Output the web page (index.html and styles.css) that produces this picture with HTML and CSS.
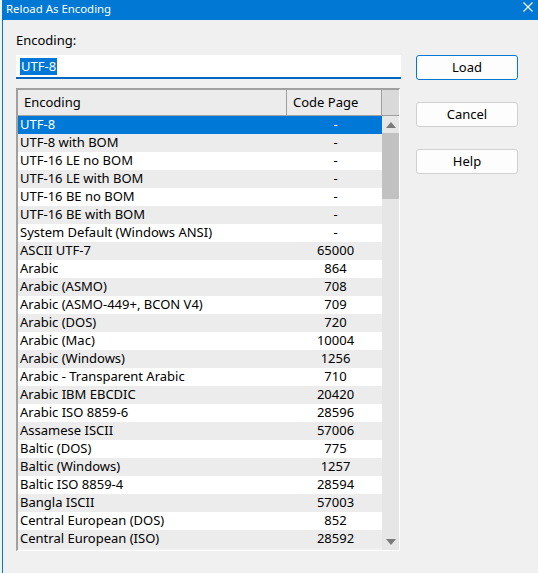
FILE: index.html
```html
<!DOCTYPE html>
<html lang="en">

<head>
    <meta charset="UTF-8">
    <meta name="viewport" content="width=device-width, initial-scale=1.0">
    <title>Reload As Encoding</title>
    <link rel="stylesheet" href="styles.css">
</head>

<body>
    <div class="window">
        <div class="titlebar">
            <span class="title">Reload As Encoding</span>
            <svg class="close" width="10" height="10" viewBox="0 0 10 10">
                <path d="M0.5 0.5 L9.5 9.5 M9.5 0.5 L0.5 9.5" stroke="#fff" stroke-width="1.1" fill="none" />
            </svg>
        </div>
        <div class="dialog">
            <div class="main">
                <label class="label" for="enc">Encoding:</label>
                <div class="input"><span class="selected-text">UTF-8</span></div>
                <div class="listbox">
                    <div class="header">
                        <div class="col-name">Encoding</div>
                        <div class="col-page">Code Page</div>
                        <div class="col-scroll"></div>
                    </div>
                    <div class="body">
                        <div class="rows" id="rows"></div>
                        <div class="scrollbar">
                            <div class="arrow up"></div>
                            <div class="track"><div class="thumb"></div></div>
                            <div class="arrow down"></div>
                        </div>
                    </div>
                </div>
            </div>
            <div class="buttons">
                <button class="btn default">Load</button>
                <button class="btn">Cancel</button>
                <button class="btn">Help</button>
            </div>
        </div>
    </div>
    <script>
        const encodings = [
            ["UTF-8", "-"],
            ["UTF-8 with BOM", "-"],
            ["UTF-16 LE no BOM", "-"],
            ["UTF-16 LE with BOM", "-"],
            ["UTF-16 BE no BOM", "-"],
            ["UTF-16 BE with BOM", "-"],
            ["System Default (Windows ANSI)", "-"],
            ["ASCII UTF-7", "65000"],
            ["Arabic", "864"],
            ["Arabic (ASMO)", "708"],
            ["Arabic (ASMO-449+, BCON V4)", "709"],
            ["Arabic (DOS)", "720"],
            ["Arabic (Mac)", "10004"],
            ["Arabic (Windows)", "1256"],
            ["Arabic - Transparent Arabic", "710"],
            ["Arabic IBM EBCDIC", "20420"],
            ["Arabic ISO 8859-6", "28596"],
            ["Assamese ISCII", "57006"],
            ["Baltic (DOS)", "775"],
            ["Baltic (Windows)", "1257"],
            ["Baltic ISO 8859-4", "28594"],
            ["Bangla ISCII", "57003"],
            ["Central European (DOS)", "852"],
            ["Central European (ISO)", "28592"]
        ];
        const list = document.getElementById('rows');
        for (let i = 0; i < encodings.length; i++) {
            const row = document.createElement('div');
            row.className = 'row' + (i % 2 ? ' odd' : '') + (i === 0 ? ' active' : '');
            row.innerHTML = `<span class="name">${encodings[i][0]}</span><span class="page">${encodings[i][1]}</span>`;
            list.appendChild(row);
        }
    </script>
</body>

</html>
```

FILE: styles.css
```css
body {
    margin: 0;
    width: 538px;
    height: 573px;
    overflow: hidden;
    background: #eef3ee;
    font-family: "Segoe UI", "Noto Sans", sans-serif;
    font-size: 13px;
    color: #000;
}

.window {
    margin-left: 2px;
    height: 573px;
    background: #f0f0f0;
    border-left: 1px solid #0078d4;
}

.titlebar {
    height: 20px;
    margin-left: -1px;
    background: #0078d4;
    color: #fff;
    display: flex;
    align-items: center;
    justify-content: space-between;
    padding: 0 5px 0 4px;
}

.title {
    font-size: 11.4px;
    line-height: 20px;
    margin-top: -3px;
}

.close {
    margin-top: -7px;
}

.dialog {
    display: flex;
    padding: 10px 0 0 13px;
}

.main {
    width: 384px;
}

.label {
    display: block;
    height: 25px;
    line-height: 20px;
}

.input {
    background: #fff;
    border-bottom: 2px solid #0067c0;
    margin-right: -1px;
    padding: 2px 0 0 4px;
    height: 20px;
}

.selected-text {
    background: #0078d7;
    color: #fff;
    line-height: 17px;
    display: inline-block;
    padding: 0 1px;
}

.listbox {
    margin-top: 9px;
    border-top: 2px solid #a0a0a0;
    border-left: 2px solid #a0a0a0;
    border-right: 1px solid #fff;
    border-bottom: 1px solid #fff;
    background: #f0f0f0;
}

.header {
    display: flex;
    height: 25px;
    border-bottom: 1px solid #a0a0a0;
    background: #ececec;
}

.header > div {
    line-height: 25px;
    padding-left: 6px;
    box-sizing: border-box;
}

.col-name {
    width: 269px;
    border-right: 1px solid #a0a0a0;
}

.col-page {
    width: 95px;
    border-right: 1px solid #a0a0a0;
}

.col-scroll {
    flex: 1;
    background: #d9d9d9;
}

.body {
    display: flex;
}

.rows {
    width: 364px;
}

.row {
    display: flex;
    height: 18px;
    line-height: 17px;
    background: #fff;
}

.row.odd {
    background: #ececec;
}

.row.active {
    background: #0078d7;
    color: #fff;
}

.name {
    width: 269px;
    padding-left: 2px;
    white-space: nowrap;
}

.page {
    flex: 1;
    text-align: center;
}

.scrollbar {
    width: 17px;
    height: 434px;
    background: #e6e6e6;
    display: flex;
    flex-direction: column;
}

.arrow {
    height: 17px;
    display: flex;
    align-items: center;
    justify-content: center;
}

.arrow::before {
    content: "";
    border-left: 5px solid transparent;
    border-right: 5px solid transparent;
}

.arrow.up::before {
    border-bottom: 6px solid #7a7a7a;
}

.arrow.down::before {
    border-top: 6px solid #7a7a7a;
}

.track {
    flex: 1;
}

.thumb {
    height: 66px;
    background: #c1c1c1;
}

.buttons {
    display: flex;
    flex-direction: column;
    gap: 22px;
    margin-left: 16px;
    padding-top: 25px;
}

.btn {
    width: 102px;
    height: 25px;
    font-family: inherit;
    font-size: 13px;
    color: #000;
    background: #fdfdfd;
    border: 1px solid #d0d0d0;
    border-radius: 3px;
    padding: 0 0 2px;
}

.btn.default {
    border-color: #0078d4;
}
```
